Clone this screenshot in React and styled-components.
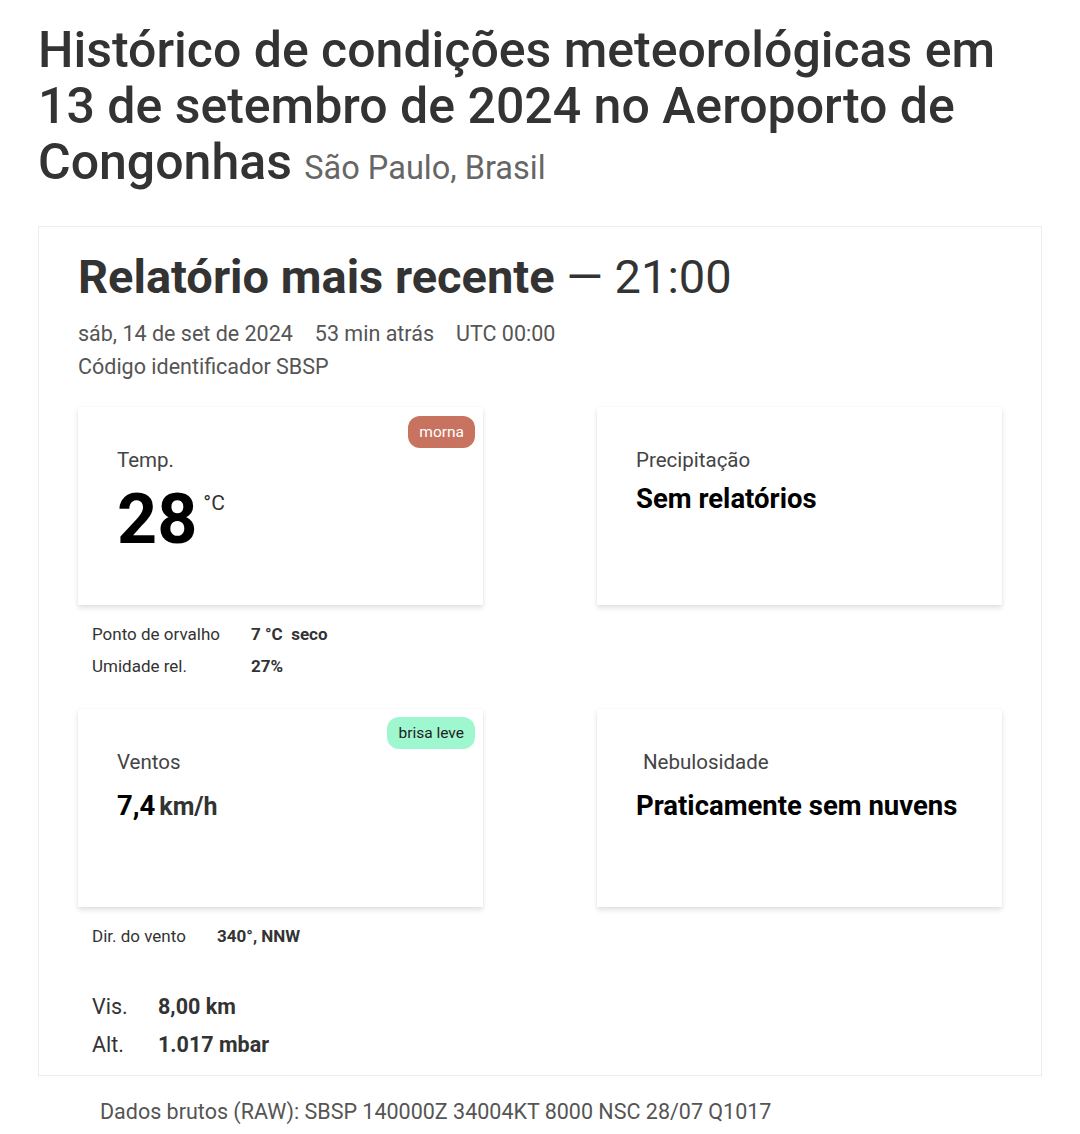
import React from "react";
import styled, { createGlobalStyle } from "styled-components";

const GlobalStyle = createGlobalStyle`
  body {
    margin: 0;
    background: #fff;
    font-family: Roboto, "Noto Sans", "Liberation Sans", sans-serif;
    color: #333;
  }
`;

const Page = styled.div`
  width: 1080px;
  padding: 22px 38px 0;
  box-sizing: border-box;
`;

const Title = styled.h1`
  margin: 0;
  font-size: 50px;
  line-height: 56px;
  font-weight: 500;
  color: #333;
`;

const Location = styled.span`
  font-size: 32.5px;
  font-weight: 400;
  color: #666;
`;

const Report = styled.section`
  margin-top: 30px;
  border: 1px solid #ececec;
  padding: 22px 39px 11px;
`;

const ReportTitle = styled.h2`
  margin: 0;
  font-size: 47px;
  line-height: 56px;
  font-weight: 700;
  color: #333;
`;

const Time = styled.span`
  font-weight: 400;
`;

const MetaRow = styled.div`
  display: flex;
  gap: 22px;
  margin-top: ${(p) => p.$top || 0}px;
  font-size: 21.5px;
  line-height: 33px;
  color: #555;
`;

const Grid = styled.div`
  display: grid;
  grid-template-columns: 405px 405px;
  column-gap: 114px;
  margin-top: 24px;
`;

const Column = styled.div`
  display: flex;
  flex-direction: column;
`;

const Tile = styled.div`
  position: relative;
  height: 198px;
  box-sizing: border-box;
  padding: 40px 16px 0 ${(p) => p.$left || 39}px;
  background: #fff;
  box-shadow: 0 3px 5px rgba(0, 0, 0, 0.12), 0 0 1px rgba(0, 0, 0, 0.08);
`;

const Badge = styled.span`
  position: absolute;
  top: ${(p) => p.$top}px;
  right: 8px;
  height: 32px;
  padding: 0 11px;
  border-radius: 12px;
  display: flex;
  align-items: center;
  font-size: 15.5px;
  background: ${(p) => p.$bg};
  color: ${(p) => p.$fg};
`;

const Label = styled.div`
  font-size: 20.5px;
  line-height: 26px;
  color: #444;
`;

const BigValue = styled.div`
  display: flex;
  align-items: flex-start;
  margin-top: 6px;
  font-size: 70px;
  line-height: 80px;
  font-weight: 700;
  color: #000;
`;

const Unit = styled.span`
  font-size: 21px;
  line-height: 28px;
  font-weight: 400;
  color: #333;
  margin-left: 6px;
  margin-top: 10px;
`;

const Value = styled.div`
  margin-top: ${(p) => p.$top ?? 14}px;
  margin-left: ${(p) => p.$shift || 0}px;
  font-size: 27.5px;
  line-height: 34px;
  font-weight: 700;
  color: #000;
  white-space: nowrap;
`;

const SmallUnit = styled.span`
  font-size: 25px;
  color: #333;
  margin-left: 4px;
`;

const Details = styled.div`
  display: grid;
  grid-template-columns: ${(p) => p.$col}px auto;
  box-sizing: border-box;
  padding: 13px 0 0 14px;
  min-height: ${(p) => p.$min || 0}px;
  align-content: start;
  font-size: 17px;
  line-height: 32px;
  color: #333;
`;

const DetailValue = styled.span`
  font-weight: 700;
  color: #333;
`;

const Extra = styled.div`
  display: grid;
  grid-template-columns: 66px auto;
  padding: 36px 0 0 14px;
  font-size: 21.5px;
  line-height: 38px;
  color: #333;
`;

const Raw = styled.div`
  padding: 18px 0 0 62px;
  font-size: 21.5px;
  line-height: 36px;
  color: #555;
`;

export default function App() {
  return (
    <Page>
      <GlobalStyle />
      <Title>
        Histórico de condições meteorológicas em 13 de setembro de 2024 no
        Aeroporto de Congonhas <Location>São Paulo, Brasil</Location>
      </Title>
      <Report>
        <ReportTitle>
          Relatório mais recente <Time>— 21:00</Time>
        </ReportTitle>
        <MetaRow $top={12}>
          <span>sáb, 14 de set de 2024</span>
          <span>53 min atrás</span>
          <span>UTC 00:00</span>
        </MetaRow>
        <MetaRow>
          <span>Código identificador SBSP</span>
        </MetaRow>
        <Grid>
          <Column>
            <Tile>
              <Badge $top={9} $bg="#c8735f" $fg="#fff">
                morna
              </Badge>
              <Label>Temp.</Label>
              <BigValue>
                28<Unit>°C</Unit>
              </BigValue>
            </Tile>
            <Details $col={159} $min={104}>
              <span>Ponto de orvalho</span>
              <DetailValue>7 °C&nbsp;&nbsp;seco</DetailValue>
              <span>Umidade rel.</span>
              <DetailValue>27%</DetailValue>
            </Details>
            <Tile>
              <Badge $top={8} $bg="#9ff7cf" $fg="#222">
                brisa leve
              </Badge>
              <Label>Ventos</Label>
              <Value>
                7,4<SmallUnit>km/h</SmallUnit>
              </Value>
            </Tile>
            <Details $col={125}>
              <span>Dir. do vento</span>
              <DetailValue>340°, NNW</DetailValue>
            </Details>
          </Column>
          <Column>
            <Tile>
              <Label>Precipitação</Label>
              <Value $top={9}>Sem relatórios</Value>
            </Tile>
            <Details $col={159} $min={104} />
            <Tile $left={46}>
              <Label>Nebulosidade</Label>
              <Value $shift={-7}>Praticamente sem nuvens</Value>
            </Tile>
          </Column>
        </Grid>
        <Extra>
          <span>Vis.</span>
          <DetailValue>8,00 km</DetailValue>
          <span>Alt.</span>
          <DetailValue>1.017 mbar</DetailValue>
        </Extra>
      </Report>
      <Raw>Dados brutos (RAW): SBSP 140000Z 34004KT 8000 NSC 28/07 Q1017</Raw>
    </Page>
  );
}
